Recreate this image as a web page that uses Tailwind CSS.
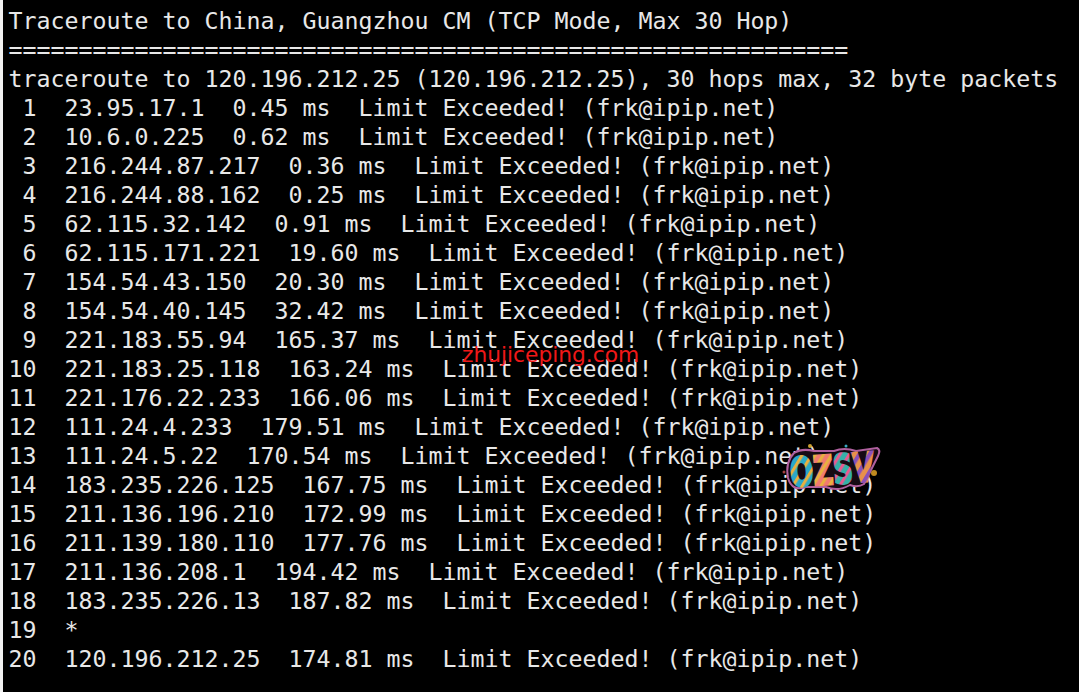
<!DOCTYPE html>
<html><head><meta charset="utf-8"><script src="https://cdn.jsdelivr.net/npm/@tailwindcss/browser@4"></script></head>
<body class="m-0 bg-black">
<div class="relative w-[1079px] h-[692px] overflow-hidden bg-black border-l-[3px] border-[#f2f2f2]">
<pre class="pl-[5.5px] pt-[6px] font-['DejaVu_Sans_Mono',monospace] text-[23.25px] leading-[29px] text-[#e8e8e8] whitespace-pre">Traceroute to China, Guangzhou CM (TCP Mode, Max 30 Hop)
============================================================
traceroute to 120.196.212.25 (120.196.212.25), 30 hops max, 32 byte packets
 1  23.95.17.1  0.45 ms  Limit Exceeded! (frk@ipip.net)
 2  10.6.0.225  0.62 ms  Limit Exceeded! (frk@ipip.net)
 3  216.244.87.217  0.36 ms  Limit Exceeded! (frk@ipip.net)
 4  216.244.88.162  0.25 ms  Limit Exceeded! (frk@ipip.net)
 5  62.115.32.142  0.91 ms  Limit Exceeded! (frk@ipip.net)
 6  62.115.171.221  19.60 ms  Limit Exceeded! (frk@ipip.net)
 7  154.54.43.150  20.30 ms  Limit Exceeded! (frk@ipip.net)
 8  154.54.40.145  32.42 ms  Limit Exceeded! (frk@ipip.net)
 9  221.183.55.94  165.37 ms  Limit Exceeded! (frk@ipip.net)
10  221.183.25.118  163.24 ms  Limit Exceeded! (frk@ipip.net)
11  221.176.22.233  166.06 ms  Limit Exceeded! (frk@ipip.net)
12  111.24.4.233  179.51 ms  Limit Exceeded! (frk@ipip.net)
13  111.24.5.22  170.54 ms  Limit Exceeded! (frk@ipip.net)
14  183.235.226.125  167.75 ms  Limit Exceeded! (frk@ipip.net)
15  211.136.196.210  172.99 ms  Limit Exceeded! (frk@ipip.net)
16  211.139.180.110  177.76 ms  Limit Exceeded! (frk@ipip.net)
17  211.136.208.1  194.42 ms  Limit Exceeded! (frk@ipip.net)
18  183.235.226.13  187.82 ms  Limit Exceeded! (frk@ipip.net)
19  *
20  120.196.212.25  174.81 ms  Limit Exceeded! (frk@ipip.net)</pre>
<span class="absolute left-[459px] top-[342px] font-['DejaVu_Sans',sans-serif] text-[21.75px] leading-[26px] text-[#f01818] whitespace-pre">zhujiceping.com</span>
<svg class="absolute left-[777px] top-[442px]" width="112" height="60" viewBox="0 0 112 60">
<defs>
<pattern id="a" width="8" height="8" patternUnits="userSpaceOnUse" patternTransform="rotate(35)"><rect width="8" height="8" fill="#2aa8c8"/><rect width="3" height="8" fill="#e8b040"/></pattern>
<pattern id="b" width="7" height="7" patternUnits="userSpaceOnUse" patternTransform="rotate(35)"><rect width="7" height="7" fill="#f07a70"/><rect width="3" height="7" fill="#e8b040"/></pattern>
<pattern id="c" width="8" height="8" patternUnits="userSpaceOnUse" patternTransform="rotate(35)"><rect width="8" height="8" fill="#35b0a8"/><rect width="3" height="8" fill="#e85a90"/></pattern>
<pattern id="d" width="9" height="9" patternUnits="userSpaceOnUse" patternTransform="rotate(35)"><rect width="9" height="9" fill="#e8904a"/><rect width="4" height="9" fill="#8a50b8"/></pattern>
</defs>
<circle cx="30" cy="4" r="2" fill="#c9a030"/><circle cx="66" cy="4" r="1.5" fill="#3aa8c0"/><circle cx="94" cy="31" r="3" fill="#c08a20"/><circle cx="4" cy="30" r="1.5" fill="#a04040"/>
<path d="M14 11 Q22 6 34 9 L54 9 Q64 5 76 9 L97 6 Q101 8 98 14 L84 42 Q78 46 70 43 Q58 50 46 45 L26 45 Q12 50 8 36 Q5 20 14 11 Z" fill="#160a14" stroke="#b0609f" stroke-width="2"/>
<text transform="rotate(-4 50 28)" x="10" y="42" font-family="DejaVu Sans" font-weight="700" font-size="40" textLength="84" lengthAdjust="spacingAndGlyphs"><tspan fill="url(#a)" stroke="url(#a)" stroke-width="2.5">O</tspan><tspan fill="url(#b)" stroke="url(#b)" stroke-width="2.5">Z</tspan><tspan fill="url(#c)" stroke="url(#c)" stroke-width="2.5">S</tspan><tspan fill="url(#d)" stroke="url(#d)" stroke-width="2.5">V</tspan></text>
</svg>
</div>
</body></html>
